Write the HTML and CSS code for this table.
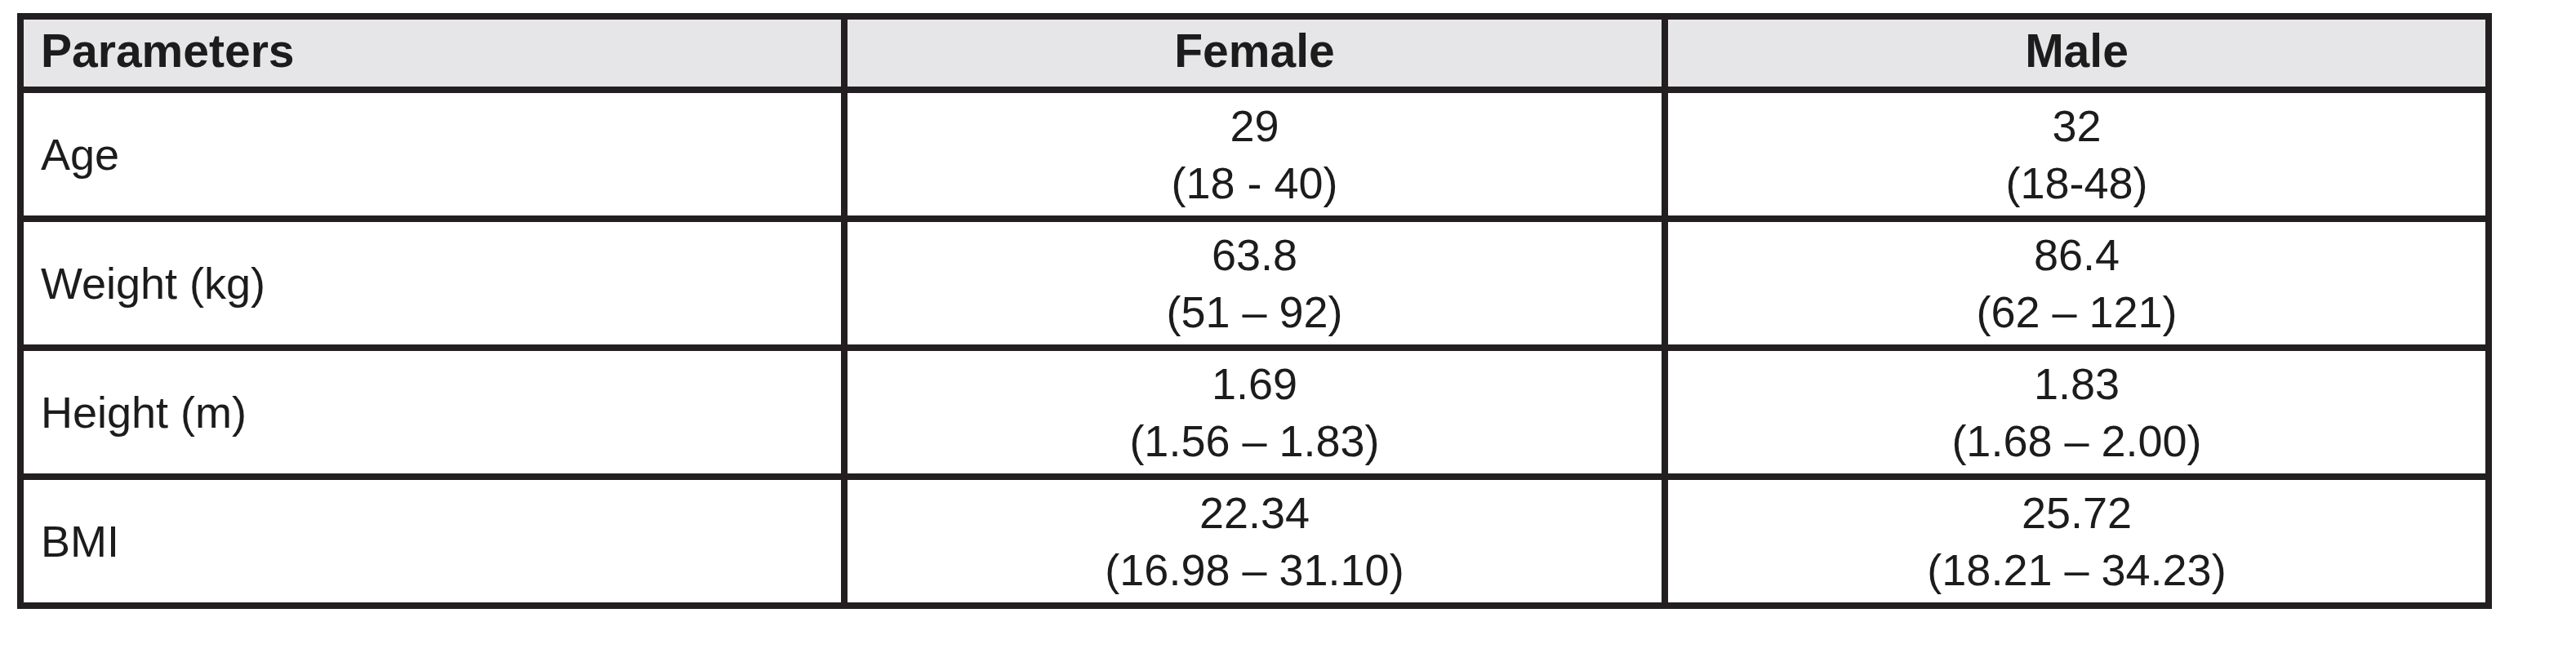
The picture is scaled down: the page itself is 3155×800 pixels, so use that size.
FILE: index.html
```html
<!DOCTYPE html>
<html lang="en">
<head>
<meta charset="utf-8">
<title>Parameters</title>
<link rel="stylesheet" href="styles.css">
</head>
<body>
<div class="table" role="table">
  <div class="cell head label" role="columnheader">Parameters</div>
  <div class="cell head center" role="columnheader">Female</div>
  <div class="cell head center" role="columnheader">Male</div>

  <div class="cell label" role="rowheader">Age</div>
  <div class="cell value" role="cell"><span>29</span><span>(18 - 40)</span></div>
  <div class="cell value" role="cell"><span>32</span><span>(18-48)</span></div>

  <div class="cell label" role="rowheader">Weight (kg)</div>
  <div class="cell value" role="cell"><span>63.8</span><span>(51 – 92)</span></div>
  <div class="cell value" role="cell"><span>86.4</span><span>(62 – 121)</span></div>

  <div class="cell label" role="rowheader">Height (m)</div>
  <div class="cell value" role="cell"><span>1.69</span><span>(1.56 – 1.83)</span></div>
  <div class="cell value" role="cell"><span>1.83</span><span>(1.68 – 2.00)</span></div>

  <div class="cell label" role="rowheader">BMI</div>
  <div class="cell value" role="cell"><span>22.34</span><span>(16.98 – 31.10)</span></div>
  <div class="cell value" role="cell"><span>25.72</span><span>(18.21 – 34.23)</span></div>
</div>
</body>
</html>
```
FILE: styles.css
```css
html, body {
  margin: 0;
  padding: 0;
  background: #ffffff;
}

body {
  font-family: "Liberation Sans", Arial, sans-serif;
  color: #1c1c1c;
}

.table {
  box-sizing: border-box;
  width: 3031px;
  margin: 16px 0 0 21px;
  padding: 8px;
  gap: 8px;
  display: grid;
  grid-template-columns: 1001fr 997fr 1001fr;
  grid-template-rows: 82px repeat(4, 150px);
  background: #231f20;
}

.cell {
  background: #ffffff;
  display: flex;
  flex-direction: column;
  justify-content: center;
  font-size: 54px;
  line-height: 70px;
  padding: 0 21px;
}

.cell.label {
  align-items: flex-start;
}

.cell.value,
.cell.center {
  align-items: center;
  text-align: center;
}

.cell.head {
  background: #e6e6e8;
  font-weight: bold;
  font-size: 57px;
  line-height: 66px;
  padding-bottom: 6px;
}

.cell.value span {
  display: block;
  white-space: nowrap;
}
```
